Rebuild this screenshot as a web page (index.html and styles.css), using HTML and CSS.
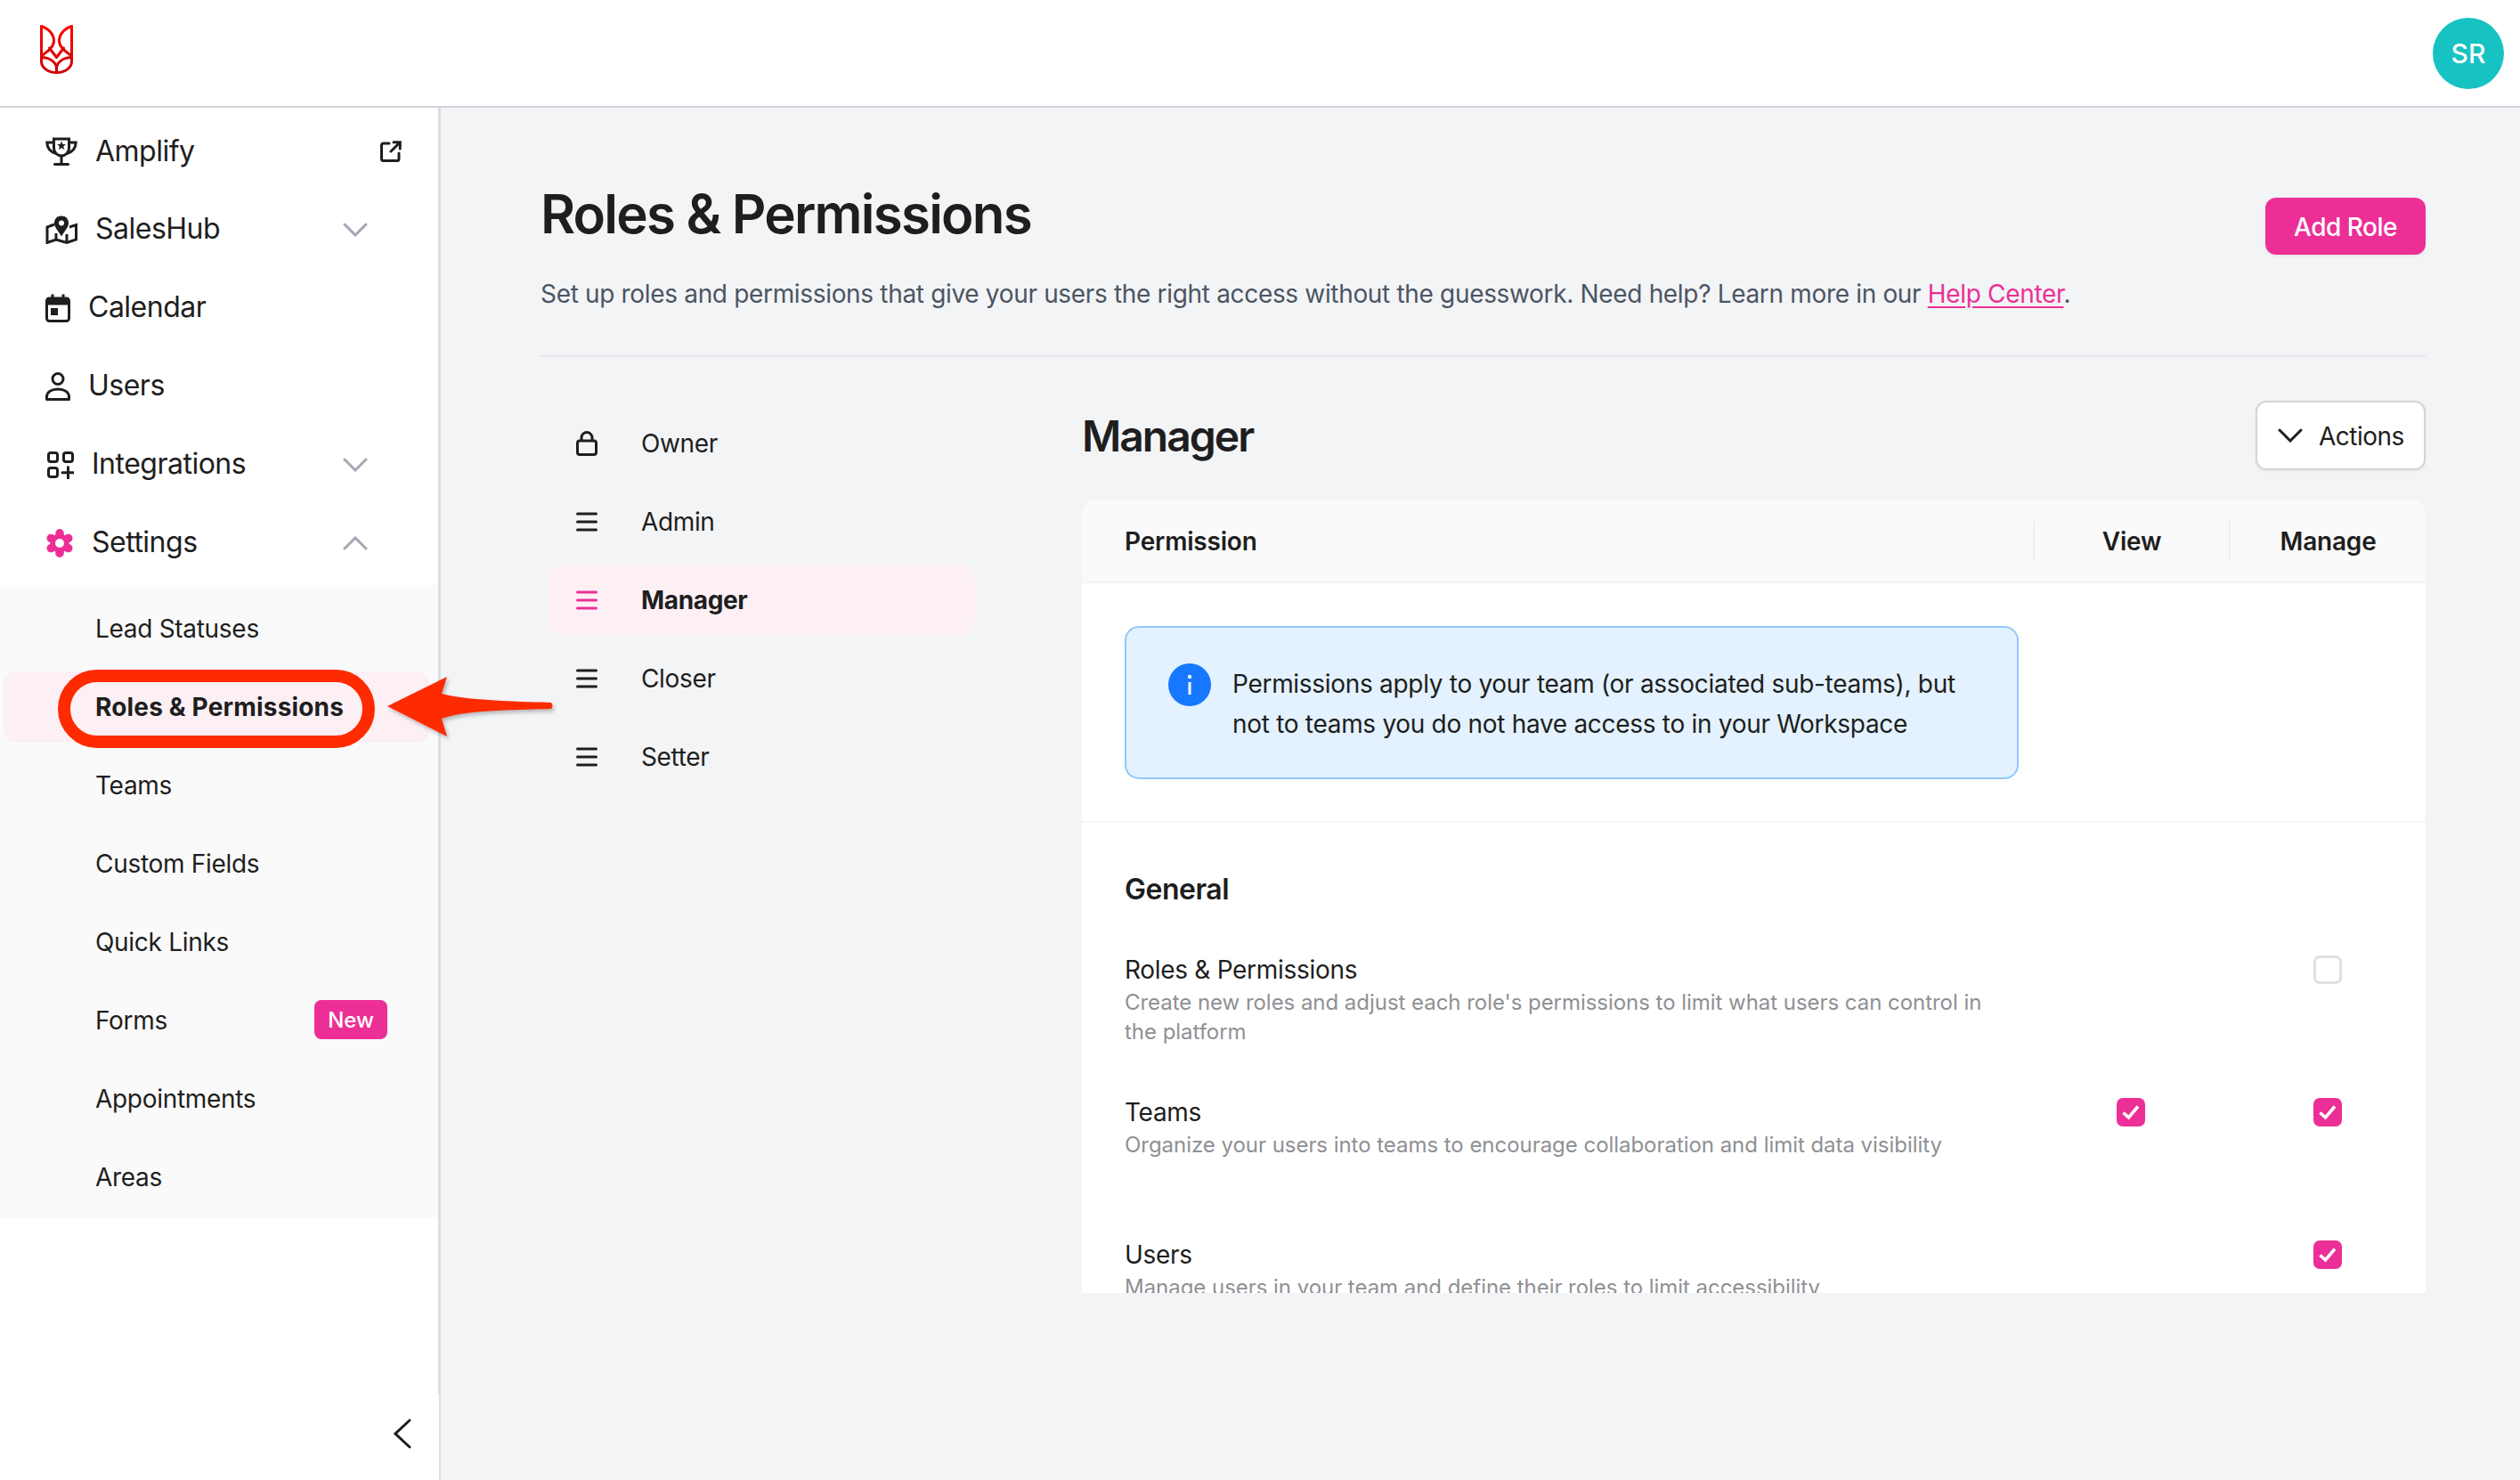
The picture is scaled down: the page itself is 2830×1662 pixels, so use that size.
FILE: index.html
```html
<!DOCTYPE html>
<html lang="en">
<head>
<meta charset="utf-8">
<title>Roles &amp; Permissions</title>
<link rel="stylesheet" href="styles.css">
</head>
<body>
<div class="shell">
  <header class="topbar">
    <svg class="logo" width="37" height="55" viewBox="0 0 37 55" fill="none" stroke="url(#lg)" stroke-width="3" stroke-linejoin="round" stroke-linecap="round">
      <defs><linearGradient id="lg" gradientUnits="userSpaceOnUse" x1="0" y1="0" x2="0" y2="55"><stop offset="0" stop-color="#ff0000"/><stop offset="1" stop-color="#cf0000"/></linearGradient></defs>
      <path d="M1.500 1.500V41C1.500 48 9 53.500 18.500 53.500C28 53.500 35.500 48 35.500 41V1.500"/>
      <path d="M1.500 1.500C10 4 15.500 11 15.500 18C15.500 25 8 30 1.500 35"/>
      <path d="M35.500 1.500C27 4 21.500 11 21.500 18C21.500 25 29 30 35.500 35"/>
      <path d="M10.500 26L18.500 36.500L26.500 26"/>
      <path d="M18.500 53V49C18.500 42 11 36.500 1.500 36.500"/>
      <path d="M18.500 53V49C18.500 42 26 36.500 35.500 36.500"/>
    </svg>
    <div class="avatar">SR</div>
  </header>
  <div class="layout">
    <aside class="sidebar">
      <nav class="nav">
        <a class="nav-item">
          <svg class="ico" width="36" height="32" viewBox="0 0 36 32" fill="none" stroke="#1e1e20" stroke-width="3"><path d="M9.500 2H26.500V12C26.500 17.500 22.500 21 18 21C13.500 21 9.500 17.500 9.500 12Z"/><path d="M9.500 6H1.800C2 12 5 16.500 12 18.500"/><path d="M26.500 6H34.200C34 12 31 16.500 24 18.500"/><path d="M18 21V30M10.500 30.500H25.500" stroke-linecap="round"/><path d="M18 4.500L19.400 8H23L20.200 10.300L21.200 14L18 12L14.800 14L15.800 10.300L13 8H16.600Z" fill="#1e1e20" stroke="none"/></svg>
          <span>Amplify</span>
          <svg class="ext" width="24" height="24" viewBox="0 0 24 24" fill="none" stroke="#1e1e20" stroke-width="3" stroke-linecap="round"><path d="M10 3H3.500A2 2 0 0 0 1.500 5V20.500A2 2 0 0 0 3.500 22.500H19A2 2 0 0 0 21 20.500V14"/><path d="M12 12L22 2M15 1.700H22.300V9"/></svg>
        </a>
        <a class="nav-item">
          <svg class="ico" width="36" height="32" viewBox="0 0 36 32" fill="none" stroke="#1e1e20" stroke-width="3"><path d="M10 10L2 13V30.500L12 27L24 30.500L34.500 27V10.500L27 13"/><path d="M12 20V27M24 21V30"/><path d="M18 0.500C13 0.500 10 4 10 8.500C10 13.500 15 18 18 23.500C21 18 26 13.500 26 8.500C26 4 23 0.500 18 0.500Z" fill="#1e1e20" stroke="none"/><circle cx="18" cy="8.500" r="3" fill="#fff" stroke="none"/></svg>
          <span>SalesHub</span>
          <svg class="chev" width="28" height="16" viewBox="0 0 28 16" fill="none" stroke="#a3a8b4" stroke-width="3" stroke-linecap="round"><path d="M2 2L14 14L26 2"/></svg>
        </a>
        <a class="nav-item">
          <svg class="ico" width="28" height="32" viewBox="0 0 28 32" fill="none" stroke="#1e1e20" stroke-width="3"><rect x="1.500" y="5" width="25" height="25.500" rx="3"/><path d="M1.500 8.500H26.500" stroke-width="8"/><path d="M8 0.500V6M20 0.500V6"/><rect x="6" y="16" width="8" height="8" fill="#1e1e20" stroke="none"/></svg>
          <span>Calendar</span>
        </a>
        <a class="nav-item">
          <svg class="ico" width="28" height="32" viewBox="0 0 28 32" fill="none" stroke="#1e1e20" stroke-width="3"><circle cx="14" cy="7.500" r="6"/><path d="M1.500 30.500V28C1.500 22 7 19 14 19C21 19 26.500 22 26.500 28V30.500Z" stroke-linejoin="round"/></svg>
          <span>Users</span>
        </a>
        <a class="nav-item">
          <svg class="ico" width="32" height="32" viewBox="0 0 32 32" fill="none" stroke="#1e1e20" stroke-width="3"><rect x="3.500" y="2.500" width="10" height="10" rx="2.500"/><rect x="20.500" y="2.500" width="10" height="10" rx="2.500"/><rect x="3.500" y="19.500" width="10" height="10" rx="2.500"/><path d="M25.500 18.500V31M19 24.700H31.500" stroke-linecap="round"/></svg>
          <span>Integrations</span>
          <svg class="chev" width="28" height="16" viewBox="0 0 28 16" fill="none" stroke="#a3a8b4" stroke-width="3" stroke-linecap="round"><path d="M2 2L14 14L26 2"/></svg>
        </a>
        <a class="nav-item">
          <svg class="ico" width="32" height="32" viewBox="-16 -16 32 32"><g stroke="#ec2f96" stroke-width="9.500" stroke-linecap="round"><path d="M0 0V-11.200"/><path d="M0 0V11.200"/><path d="M0 0L9.700 -5.600"/><path d="M0 0L-9.700 -5.600"/><path d="M0 0L9.700 5.600"/><path d="M0 0L-9.700 5.600"/></g><circle r="10.500" fill="#ec2f96"/><circle r="5" fill="#fff"/></svg>
          <span>Settings</span>
          <svg class="chev" width="28" height="16" viewBox="0 0 28 16" fill="none" stroke="#a3a8b4" stroke-width="3" stroke-linecap="round"><path d="M2 14L14 2L26 14"/></svg>
        </a>
        <div class="subnav">
          <a class="sub-item">Lead Statuses</a>
          <a class="sub-item sub-active">Roles &amp; Permissions<span class="oval"></span></a>
          <a class="sub-item">Teams</a>
          <a class="sub-item">Custom Fields</a>
          <a class="sub-item">Quick Links</a>
          <a class="sub-item">Forms<span class="badge">New</span></a>
          <a class="sub-item">Appointments</a>
          <a class="sub-item">Areas</a>
        </div>
      </nav>
      <div class="side-foot">
        <svg width="20" height="34" viewBox="0 0 20 34" fill="none" stroke="#1e1e20" stroke-width="3" stroke-linecap="round"><path d="M18 2L2 17L18 32"/></svg>
      </div>
    </aside>
    <main class="main">
      <section class="page-head">
        <div>
          <h1 class="title">Roles &amp; Permissions</h1>
          <p class="subtitle">Set up roles and permissions that give your users the right access without the guesswork. Need help? Learn more in our <a class="link">Help Center</a>.</p>
        </div>
        <button class="btn-primary">Add Role</button>
      </section>
      <section class="body">
        <ul class="roles">
          <li class="role">
            <svg width="24" height="28" viewBox="0 0 24 28" fill="none" stroke="#1e1e20" stroke-width="3"><rect x="1.500" y="11" width="21" height="15.500" rx="2.500"/><path d="M6 11V7.500A6 6 0 0 1 18 7.500V11"/></svg>
            <span>Owner</span>
          </li>
          <li class="role">
            <svg width="24" height="22" viewBox="0 0 24 22" fill="none" stroke="#1e1e20" stroke-width="3" stroke-linecap="round"><path d="M1.500 2H22.500M1.500 11H22.500M1.500 20H22.500"/></svg>
            <span>Admin</span>
          </li>
          <li class="role role-active">
            <svg width="24" height="22" viewBox="0 0 24 22" fill="none" stroke="#ec2f96" stroke-width="3" stroke-linecap="round"><path d="M1.500 2H22.500M1.500 11H22.500M1.500 20H22.500"/></svg>
            <span>Manager</span>
          </li>
          <li class="role">
            <svg width="24" height="22" viewBox="0 0 24 22" fill="none" stroke="#1e1e20" stroke-width="3" stroke-linecap="round"><path d="M1.500 2H22.500M1.500 11H22.500M1.500 20H22.500"/></svg>
            <span>Closer</span>
          </li>
          <li class="role">
            <svg width="24" height="22" viewBox="0 0 24 22" fill="none" stroke="#1e1e20" stroke-width="3" stroke-linecap="round"><path d="M1.500 2H22.500M1.500 11H22.500M1.500 20H22.500"/></svg>
            <span>Setter</span>
          </li>
        </ul>
        <div class="detail">
          <div class="detail-head">
            <h2 class="detail-title">Manager</h2>
            <button class="btn-actions">
              <svg width="28" height="16" viewBox="0 0 28 16" fill="none" stroke="#1e1e20" stroke-width="3" stroke-linecap="round"><path d="M2 2L14 14L26 2"/></svg>
              <span>Actions</span>
            </button>
          </div>
          <div class="panel">
            <div class="table-head">
              <div class="th th-first">Permission</div>
              <div class="th"><span class="th-cell">View</span></div>
              <div class="th"><span class="th-cell">Manage</span></div>
            </div>
            <div class="info-wrap">
              <div class="info">
                <svg class="info-ico" width="48" height="48" viewBox="0 0 48 48"><circle cx="24" cy="24" r="24" fill="#1677ff"/><rect x="22.500" y="21" width="3" height="14" fill="#fff"/><circle cx="24" cy="15" r="2.200" fill="#fff"/></svg>
                <p class="info-text">Permissions apply to your team (or associated sub-teams), but not to teams you do not have access to in your Workspace</p>
              </div>
            </div>
            <div class="perms">
              <h3 class="perms-title">General</h3>
              <div class="perm">
                <div>
                  <div class="perm-name">Roles &amp; Permissions</div>
                  <div class="perm-desc">Create new roles and adjust each role's permissions to limit what users can control in the platform</div>
                </div>
                <div class="cell"></div>
                <div class="cell"><span class="cb"></span></div>
              </div>
              <div class="perm">
                <div>
                  <div class="perm-name">Teams</div>
                  <div class="perm-desc">Organize your users into teams to encourage collaboration and limit data visibility</div>
                </div>
                <div class="cell"><span class="cb cb-on"><svg width="32" height="32" viewBox="0 0 32 32" fill="none" stroke="#fff" stroke-width="3.500"><path d="M7.500 16.500L13.500 22L24 9.500"/></svg></span></div>
                <div class="cell"><span class="cb cb-on"><svg width="32" height="32" viewBox="0 0 32 32" fill="none" stroke="#fff" stroke-width="3.500"><path d="M7.500 16.500L13.500 22L24 9.500"/></svg></span></div>
              </div>
              <div class="perm">
                <div>
                  <div class="perm-name">Users</div>
                  <div class="perm-desc">Manage users in your team and define their roles to limit accessibility</div>
                </div>
                <div class="cell"></div>
                <div class="cell"><span class="cb cb-on"><svg width="32" height="32" viewBox="0 0 32 32" fill="none" stroke="#fff" stroke-width="3.500"><path d="M7.500 16.500L13.500 22L24 9.500"/></svg></span></div>
              </div>
            </div>
          </div>
        </div>
      </section>
    </main>
  </div>
  <svg class="arrow" width="200" height="80" viewBox="0 0 200 80"><path d="M5 38L72 5L66 24C95 32 160 33 189 34Q192 38 189 41C160 42 90 42 66 52L72 72Z" fill="#ff2b00"/></svg>
</div>
</body>
</html>
```
FILE: styles.css
```css
* { box-sizing: border-box; }
html, body { margin: 0; padding: 0; height: 100%; }
body {
  font-family: Inter, "Liberation Sans", sans-serif;
  color: #1e1e20;
  background: #f3f4f6;
  overflow: hidden;
}
.shell { position: relative; height: 1662px; display: flex; flex-direction: column; }
.topbar {
  height: 121px;
  flex: none;
  background: #fff;
  border-bottom: 2px solid #d1d5db;
  display: flex;
  align-items: center;
  justify-content: space-between;
  padding: 0 18px 0 45px;
}
.logo { margin-top: -8px; }
.avatar {
  width: 80px; height: 80px; border-radius: 50%;
  background: #16c2c2; color: #fff;
  display: flex; align-items: center; justify-content: center;
  font-size: 30px; font-weight: 500;
}
.layout { flex: 1; display: flex; min-height: 0; }

.sidebar { width: 495px; flex: none; background: #fff; display: flex; flex-direction: column; }
.nav { flex: 1; padding-top: 5px; border-right: 3px solid #dcdee3; }
.nav-item {
  height: 88px;
  display: flex;
  align-items: center;
  gap: 20px;
  padding-left: 51px;
  font-size: 32px;
  letter-spacing: -0.5px;
}
.nav-item span { margin-bottom: 3px; }
.nav-item:first-child span { margin-bottom: 1px; }
.chev { margin-left: auto; margin-right: 79px; }
.ext { margin-left: auto; margin-right: 41px; }
.subnav { margin-top: 3px; padding: 9px 0 6px; background: #fafafa; display: flex; flex-direction: column; gap: 8px; }
.sub-item {
  position: relative;
  height: 80px;
  margin: 0 9px 0 3px;
  padding: 0 48px 0 104px;
  display: flex;
  align-items: center;
  justify-content: space-between;
  font-size: 28px;
  letter-spacing: -0.3px;
  border-radius: 16px;
}
.sub-active { background: #fdf0f5; font-weight: 700; letter-spacing: 0.17px; }
.oval {
  position: absolute;
  left: 62px; top: -2px;
  width: 356px; height: 88px;
  border: 14px solid #ff2b00;
  border-radius: 44px;
}
.badge {
  width: 82px; height: 44px;
  margin-top: -2px;
  border-radius: 8px;
  background: #ec2f96; color: #fff;
  display: flex; align-items: center; justify-content: center;
  font-size: 24px; font-weight: 500;
  letter-spacing: 0;
}
.side-foot {
  height: 96px;
  border-right: 2px solid #dcdee3;
  padding: 27px 0 0 442px;
}
.arrow { position: absolute; left: 430px; top: 755px; filter: drop-shadow(2px 3px 2px rgba(0,0,0,.25)); }

.main { flex: 1; min-width: 0; padding: 85px 106px 0 112px; }
.page-head {
  display: flex;
  justify-content: space-between;
  align-items: flex-start;
  padding-bottom: 49px;
  border-bottom: 2px solid #e5e7eb;
}
.title { margin: -2px 0 0; font-size: 60px; line-height: 72px; font-weight: 600; letter-spacing: -1.78px; }
.subtitle { margin: 34px 0 0; font-size: 28px; line-height: 40px; color: #4b5563; letter-spacing: -0.33px; }
.link { color: #ec2f96; text-decoration: underline; text-underline-offset: 4px; }
.btn-primary {
  margin-top: 16px;
  width: 180px; height: 64px;
  padding: 2px 0 0;
  border: 0; border-radius: 12px;
  background: #ec2f96; color: #fff;
  font: 500 28px Inter, sans-serif;
  letter-spacing: -0.5px;
  box-shadow: 0 2px 4px rgba(0,0,0,.06);
}
.body { display: flex; align-items: flex-start; }
.roles { list-style: none; margin: 57px 0 0 8px; padding: 0; width: 480px; flex: none; display: flex; flex-direction: column; gap: 8px; }
.role {
  height: 80px;
  padding-left: 32px;
  display: flex;
  align-items: center;
  gap: 49px;
  font-size: 28px;
  letter-spacing: -0.35px;
  border-radius: 16px;
}
.role-active { background: #fdf0f5; font-weight: 700; }
.detail { flex: 1; margin-left: 120px; min-width: 0; padding-top: 49px; }
.detail-head { height: 78px; display: flex; align-items: center; justify-content: space-between; }
.detail-title { margin: 0; font-size: 48px; font-weight: 600; letter-spacing: -2px; }
.btn-actions {
  width: 191px; height: 78px;
  padding: 0 0 0 23px;
  display: flex; align-items: center; gap: 18px;
  background: #fff; color: #1e1e20;
  border: 2px solid #d4d5d8; border-radius: 12px;
  font: 400 28px Inter, sans-serif;
  letter-spacing: -0.5px;
  box-shadow: 0 1px 3px rgba(0,0,0,.06);
}
.btn-actions span { margin-top: 2px; }
.panel { margin-top: 33px; height: 891px; background: #fff; border-radius: 16px 16px 0 0; overflow: hidden; }
.table-head {
  height: 94px;
  background: #fafafa;
  border-bottom: 2px solid #f3f4f6;
  display: grid;
  grid-template-columns: 1fr 220px 221px;
  align-items: center;
  font-size: 28px;
  font-weight: 600;
  letter-spacing: -0.2px;
}
.th-first { padding: 2px 0 0 48px; }
.th { display: flex; }
.th-cell {
  flex: 1;
  height: 44px;
  line-height: 46px;
  text-align: center;
  border-left: 2px solid #f0f0f2;
}
.info-wrap { padding: 48px 0 47px 48px; border-bottom: 2px solid #f3f4f6; }
.info {
  width: 1004px; height: 172px;
  padding: 41px 40px 0 47px;
  display: flex;
  gap: 24px;
  align-items: flex-start;
  background: #e3f2fe;
  border: 2px solid #8fc8fb;
  border-radius: 16px;
}
.info-ico { flex: none; margin-top: -1px; }
.info-text { margin: 0; font-size: 28px; line-height: 45px; letter-spacing: -0.3px; }
.perms { padding: 55px 0 0 48px; }
.perms-title { margin: 0 0 50px; font-size: 32px; line-height: 40px; font-weight: 600; letter-spacing: -0.5px; }
.perm {
  height: 160px;
  display: grid;
  grid-template-columns: 1fr 220px 221px;
}
.perm > div:first-child { padding-right: 30px; }
.perm-name { font-size: 28px; line-height: 40px; letter-spacing: -0.3px; }
.perm-desc { margin-top: 0; font-size: 24px; line-height: 33px; color: #8f9094; letter-spacing: -0.04px; }
.cell { display: flex; justify-content: center; padding-top: 4px; }
.cb {
  width: 32px; height: 32px;
  border: 3px solid #dfe0e2;
  border-radius: 7px;
  background: #fff;
  display: block;
}
.cb-on { border: 0; background: #ec2f96; }
.cb svg { display: block; }
```
